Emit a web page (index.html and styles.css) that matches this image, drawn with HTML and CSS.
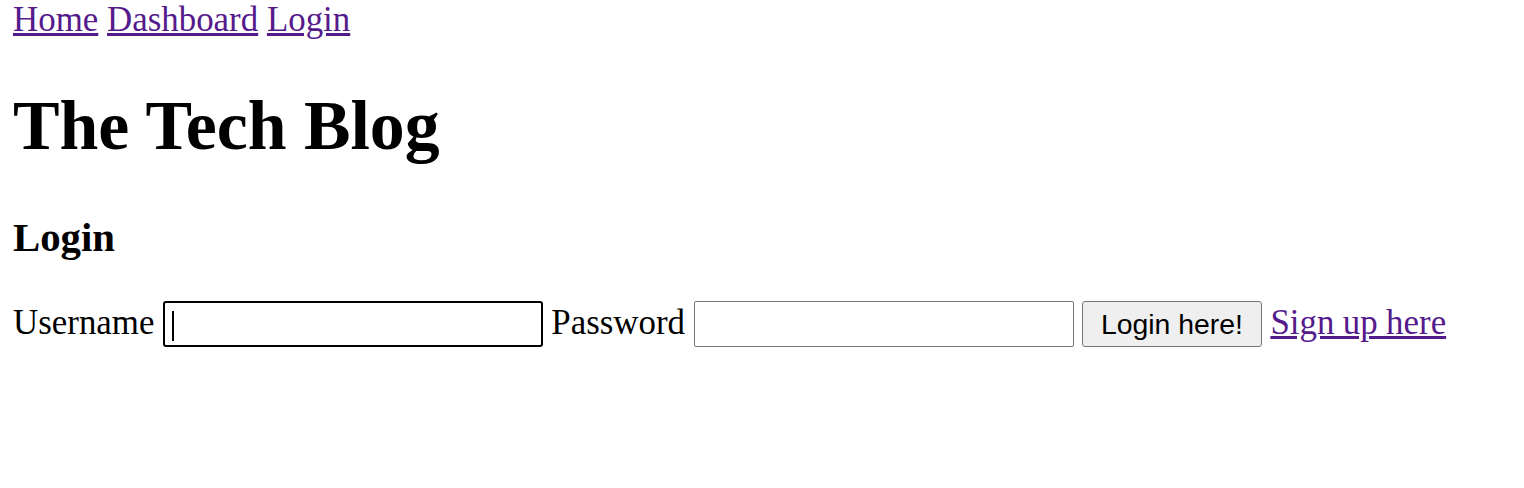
FILE: index.html
```html
<!DOCTYPE html>
<html>
<head>
<meta charset="utf-8">
<title>The Tech Blog</title>
<link rel="stylesheet" href="styles.css">
</head>
<body>
<nav class="nav"><a href="#">Home</a> <a href="#">Dashboard</a> <a href="#">Login</a></nav>
<h1 class="title">The Tech Blog</h1>
<h3 class="subtitle">Login</h3>
<form class="login-form">
<label class="label" for="username">Username</label> <input class="field field-focus" id="username" type="text"> <label class="label" for="password">Password</label> <input class="field" id="password" type="password"> <button class="btn" type="button">Login here!</button> <a href="#">Sign up here</a>
</form>
</body>
</html>
```
FILE: styles.css
```css
html, body {
  background: #fff;
}
body {
  margin: 0 13px;
  font-family: "Liberation Serif", "Times New Roman", serif;
  font-size: 34.9px;
  color: #000;
}
a {
  color: #551a8b;
  text-decoration: underline;
}
.nav {
  margin: 0;
}
.title {
  font-size: 69.8px;
  margin: 46px 0 48px;
}
.subtitle {
  font-size: 40.8px;
  margin: 40px 0;
}
.login-form {
  margin: 0;
  word-spacing: -0.3px;
}
.field {
  box-sizing: border-box;
  width: 380px;
  height: 46px;
  border: 1px solid #767676;
  border-radius: 2px;
  padding: 2px 4px;
  font-family: "Liberation Sans", Arial, sans-serif;
  font-size: 28.9px;
  background: #fff;
  vertical-align: baseline;
  margin: 0;
}
.field-focus {
  border: 2px solid #000;
  border-radius: 3px;
  background: linear-gradient(#000, #000) 7px 8px / 2px 30px no-repeat, #fff;
}
.btn {
  box-sizing: border-box;
  width: 180px;
  height: 46px;
  border: 1px solid #767676;
  border-radius: 3px;
  background: #efefef;
  font-family: "Liberation Sans", Arial, sans-serif;
  font-size: 28.4px;
  color: #000;
  padding: 0 4px;
  vertical-align: baseline;
  margin: 0;
  word-spacing: normal;
}
```
